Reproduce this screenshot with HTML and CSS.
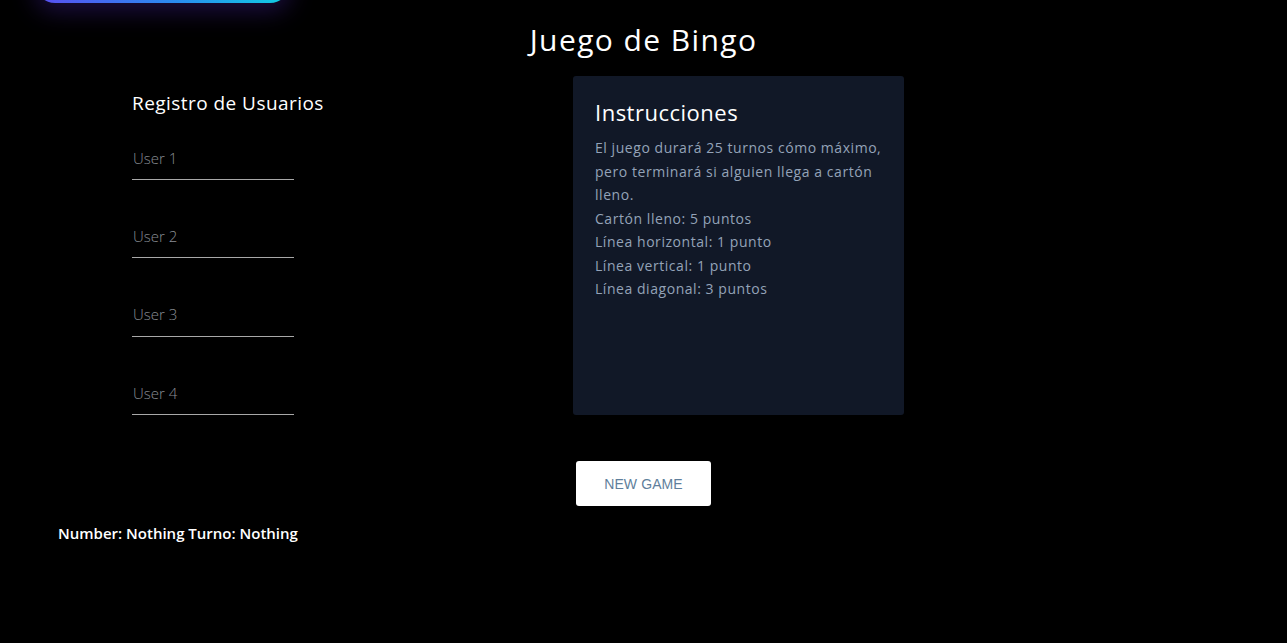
FILE: index.html
```html
<!DOCTYPE html>
<html lang="es">
<head>
<meta charset="utf-8">
<title>Juego de Bingo</title>
<link rel="stylesheet" href="styles.css">
</head>
<body>
<div class="glow-btn"></div>
<h1 class="title">Juego de Bingo</h1>
<main class="main">
  <section class="register">
    <h2 class="register-title">Registro de Usuarios</h2>
    <div class="field"><input class="user-input" type="text" placeholder="User 1"></div>
    <div class="field"><input class="user-input" type="text" placeholder="User 2"></div>
    <div class="field"><input class="user-input" type="text" placeholder="User 3"></div>
    <div class="field"><input class="user-input" type="text" placeholder="User 4"></div>
  </section>
  <section class="card">
    <h2 class="card-title">Instrucciones</h2>
    <p class="card-text">El juego durará 25 turnos cómo máximo, pero terminará si alguien llega a cartón lleno.</p>
    <p class="card-text">Cartón lleno: 5 puntos</p>
    <p class="card-text">Línea horizontal: 1 punto</p>
    <p class="card-text">Línea vertical: 1 punto</p>
    <p class="card-text">Línea diagonal: 3 puntos</p>
  </section>
</main>
<div class="actions"><button class="new-game">NEW GAME</button></div>
<p class="status">Number: Nothing Turno: Nothing</p>
</body>
</html>
```
FILE: styles.css
```css
* { box-sizing: border-box; }
html, body { margin: 0; padding: 0; background: #000; }
body {
  font-family: "Open Sans", "Noto Sans", sans-serif;
  color: #fff;
  position: relative;
  min-height: 643px;
  overflow: hidden;
}
.glow-btn {
  position: absolute;
  left: 35px;
  top: -40px;
  width: 255px;
  height: 43px;
  border-radius: 20px;
  background: linear-gradient(90deg, #5a4ef2 0%, #2a8cf0 55%, #0fd0e2 100%);
  box-shadow: 0 8px 24px rgba(80, 40, 190, 0.35);
}
.title {
  margin: 0;
  padding-top: 20px;
  text-align: center;
  font-size: 30px;
  font-weight: 500;
  line-height: 40px;
  letter-spacing: 1.4px;
}
.main {
  display: grid;
  grid-template-columns: 441px 331px;
  align-items: start;
  margin-left: 132px;
  margin-top: 16px;
}
.register { padding-top: 15px; }
.register-title {
  margin: 0 0 25px;
  font-size: 19px;
  font-weight: 500;
  line-height: 24px;
  letter-spacing: 0.45px;
}
.field { margin-bottom: 38.4px; }
.field:last-child { margin-bottom: 0; }
.user-input {
  display: block;
  width: 162px;
  height: 40px;
  background: transparent;
  border: 0;
  border-bottom: 1px solid #a8a8a8;
  color: #fff;
  font-family: inherit;
  font-size: 15px;
  font-weight: 300;
  padding: 0 1px 4px;
  outline: none;
}
.user-input::placeholder { color: #8a8e95; }
.card {
  background: #111827;
  border-radius: 3px;
  height: 339px;
  padding: 22px 22px;
}
.card-title {
  margin: 0 0 10px;
  font-size: 22px;
  font-weight: 500;
  line-height: 28px;
  letter-spacing: 0.5px;
}
.card-text {
  margin: 0;
  font-size: 14px;
  line-height: 23.5px;
  letter-spacing: 0.55px;
  color: #94a3b8;
}
.actions {
  display: flex;
  justify-content: center;
  margin-top: 46px;
}
.new-game {
  width: 135px;
  height: 45px;
  background: #fff;
  border: 0;
  border-radius: 3px;
  font-family: "Liberation Sans", Arial, sans-serif;
  font-size: 14px;
  letter-spacing: 0.1px;
  color: #5f7f9c;
}
.status {
  margin: 17px 0 0 58px;
  font-size: 15px;
  font-weight: 600;
  line-height: 20px;
}
```
